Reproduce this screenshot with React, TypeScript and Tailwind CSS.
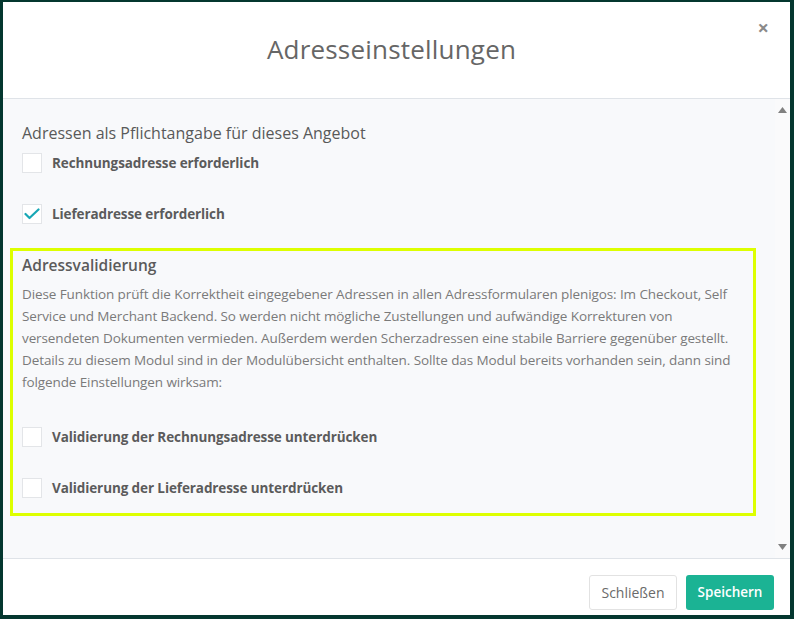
import React from "react";

const font = { fontFamily: '"Open Sans", "Noto Sans", sans-serif' };

function Box({ checked }: { checked?: boolean }) {
  return (
    <div className="w-[20px] h-[20px] bg-white border border-[#e3e5e8] flex items-center justify-center shrink-0">
      {checked && (
        <svg width="16" height="12" viewBox="0 0 16 12" fill="none">
          <path d="M1.5 6 L5.5 10 L14.5 1.5" stroke="#17a7b5" strokeWidth="2.2" strokeLinecap="round" strokeLinejoin="round" />
        </svg>
      )}
    </div>
  );
}

function Row({ label, checked }: { label: string; checked?: boolean }) {
  return (
    <div className="flex items-center gap-[10px] h-[20px]">
      <Box checked={checked} />
      <span className="text-[13.5px] font-bold text-[#5b5b5b] tracking-[-0.1px]">{label}</span>
    </div>
  );
}

export default function App() {
  return (
    <div className="w-[794px] h-[619px] bg-[#04372f] pt-[2px] pl-[3px] pr-[4px] pb-[4px]" style={font}>
      <div className="w-[787px] h-[613px] bg-white flex flex-col">
        <div className="relative h-[97px] border-b border-[#dfe3e8] flex items-center justify-center pr-[10px] shrink-0">
          <span className="text-[26px] text-[#666] tracking-[0.2px] pb-[2px]">Adresseinstellungen</span>
          <span className="absolute right-[21px] top-[11px] text-[20px] font-bold text-[#8a8a8a]">×</span>
        </div>
        <div className="flex-1 bg-[#f8f9fb] flex relative">
          <div className="flex-1 pl-[7px] pt-[23px]">
            <div className="pl-[12px]">
              <div className="text-[16px] leading-[22px] text-[#595959]">Adressen als Pflichtangabe für dieses Angebot</div>
              <div className="mt-[9px] flex flex-col gap-[31px]">
                <Row label="Rechnungsadresse erforderlich" />
                <Row label="Lieferadresse erforderlich" checked />
              </div>
            </div>
            <div className="mt-[24px] w-[746px] border-[3px] border-[#ddff00] px-[9px] pt-[3px] pb-[15px]">
              <div className="text-[15.5px] leading-[22px] font-semibold text-[#5b5b5b]">Adressvalidierung</div>
              <p className="mt-[7px] text-[13.5px] leading-[22px] text-[#7a7a7a] tracking-[-0.1px]">
                Diese Funktion prüft die Korrektheit eingegebener Adressen in allen Adressformularen plenigos: Im Checkout, Self
                Service und Merchant Backend. So werden nicht mögliche Zustellungen und aufwändige Korrekturen von
                versendeten Dokumenten vermieden. Außerdem werden Scherzadressen eine stabile Barriere gegenüber gestellt.
                Details zu diesem Modul sind in der Modulübersicht enthalten. Sollte das Modul bereits vorhanden sein, dann sind
                folgende Einstellungen wirksam:
              </p>
              <div className="mt-[34px] flex flex-col gap-[31px]">
                <Row label="Validierung der Rechnungsadresse unterdrücken" />
                <Row label="Validierung der Lieferadresse unterdrücken" />
              </div>
            </div>
          </div>
          <div className="w-[15px] bg-[#fafafb] flex flex-col items-center justify-between py-[8px]">
            <svg width="9" height="6" viewBox="0 0 9 6"><path d="M4.5 0 L9 6 L0 6 Z" fill="#808080" /></svg>
            <svg width="9" height="6" viewBox="0 0 9 6"><path d="M0 0 L9 0 L4.5 6 Z" fill="#808080" /></svg>
          </div>
        </div>
        <div className="h-[57px] border-t border-[#dfe3e8] flex items-center justify-end gap-[9px] pr-[16px] pt-[10px] shrink-0">
          <button className="h-[35px] w-[88px] border border-[#e2e2e2] rounded-[3px] bg-white text-[14px] text-[#6a6a6a]">Schließen</button>
          <button className="h-[35px] w-[88px] rounded-[3px] bg-[#1bb394] text-[13.5px] font-semibold text-white">Speichern</button>
        </div>
      </div>
    </div>
  );
}
